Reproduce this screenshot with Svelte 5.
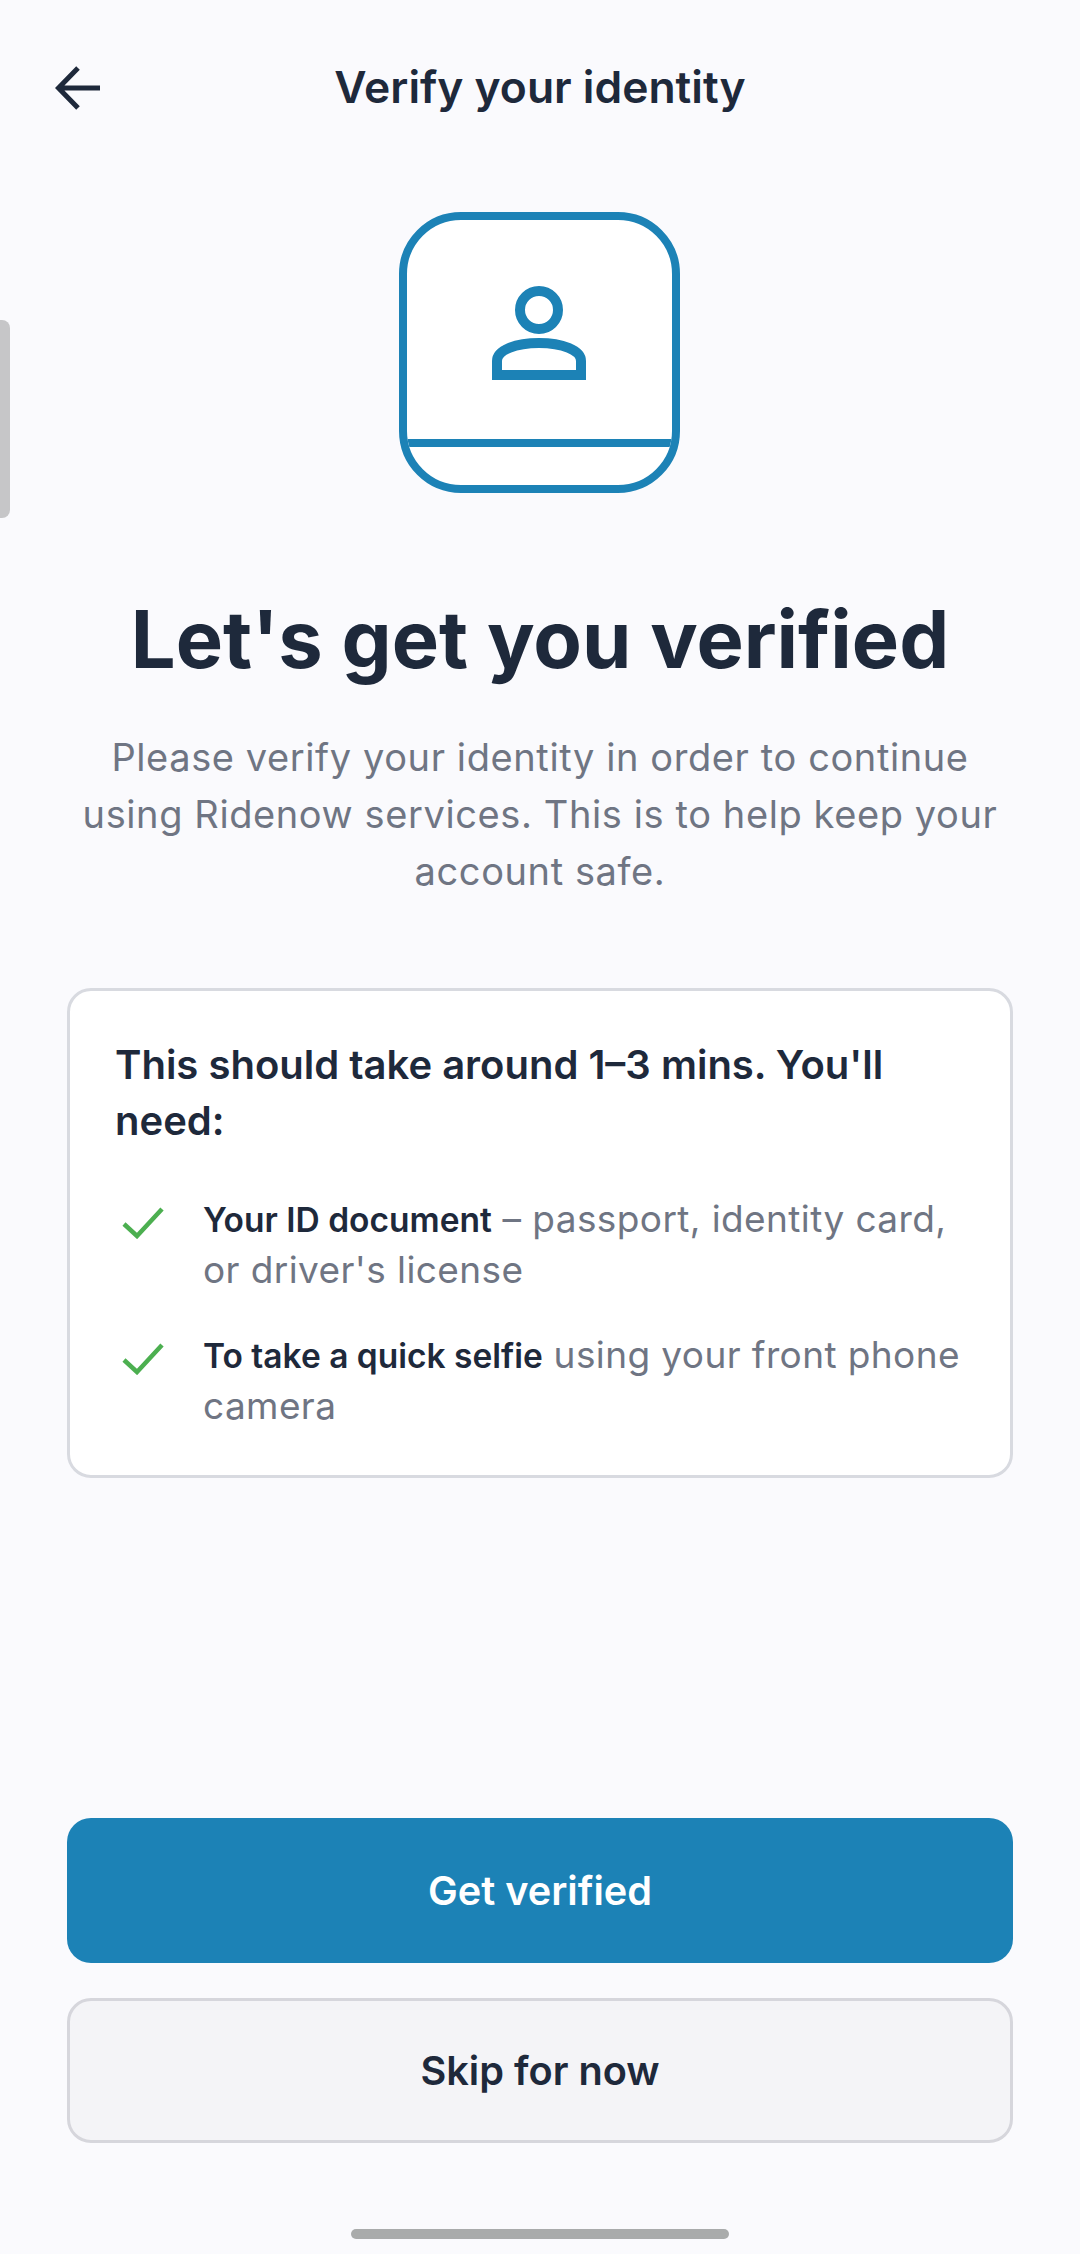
<script lang="ts">
	const needs = [
		{ label: 'Your ID document', rest: " – passport, identity card, or driver's license" },
		{ label: 'To take a quick selfie', rest: ' using your front phone camera' }
	];
</script>

<div class="screen">
	<span class="edge-handle"></span>

	<header class="topbar">
		<button class="back" aria-label="Back">
			<svg width="46" height="44" viewBox="0 0 46 44" fill="none" stroke="#1e293b" stroke-width="5">
				<path d="M45 22H4M23 2 3.500 22l19.500 20" />
			</svg>
		</button>
		<h2 class="title">Verify your identity</h2>
	</header>

	<div class="hero-icon">
		<div class="hero-top">
			<svg width="94" height="94" viewBox="0 0 94 94" fill="none" stroke="#1c82b6" stroke-width="10">
				<circle cx="47" cy="24" r="19" />
				<path d="M5 89V75C5 64 24 57 47 57s42 7 42 18v14z" />
			</svg>
		</div>
		<div class="hero-bottom"></div>
	</div>

	<h1 class="heading">Let's get you verified</h1>
	<p class="lead">Please verify your identity in order to continue using Ridenow services. This is to help keep your account safe.</p>

	<section class="card">
		<h3 class="card-title">This should take around 1–3 mins. You'll need:</h3>
		<ul class="needs">
			{#each needs as need}
				<li>
					<svg class="check" width="42" height="32" viewBox="0 0 42 32" fill="none" stroke="#4caf50" stroke-width="4.5">
						<path d="M2 17l13 12L40 2" />
					</svg>
					<p><strong>{need.label}</strong>{need.rest}</p>
				</li>
			{/each}
		</ul>
	</section>

	<div class="actions">
		<button class="btn primary">Get verified</button>
		<button class="btn secondary">Skip for now</button>
	</div>

	<div class="home-bar"></div>
</div>

<style>
	:global(body) {
		margin: 0;
		background: #fafafd;
	}

	.screen {
		position: relative;
		box-sizing: border-box;
		height: 2254px;
		padding: 0 67px 15px;
		display: flex;
		flex-direction: column;
		align-items: center;
		background: #fafafd;
		font-family: Inter, 'Noto Sans', sans-serif;
		color: #1e293b;
		overflow: hidden;
	}

	.edge-handle {
		position: absolute;
		left: 0;
		top: 320px;
		width: 10px;
		height: 198px;
		background: #c6c6c8;
		border-radius: 0 8px 8px 0;
	}

	.topbar {
		position: relative;
		align-self: stretch;
		height: 174px;
		display: flex;
		justify-content: center;
		align-items: center;
	}

	.back {
		position: absolute;
		left: -12px;
		top: 66px;
		padding: 0;
		border: 0;
		background: none;
		line-height: 0;
	}

	.title {
		margin: 0;
		font-size: 44.4px;
		font-weight: 600;
		line-height: 52px;
	}

	.hero-icon {
		margin-top: 38px;
		box-sizing: border-box;
		width: 281px;
		height: 281px;
		border: 8px solid #1c82b6;
		border-radius: 62px;
		background: #fff;
		display: flex;
		flex-direction: column;
		overflow: hidden;
		transform: translateX(-1px);
	}

	.hero-top {
		height: 227px;
		flex: none;
		box-sizing: border-box;
		border-bottom: 8px solid #1c82b6;
		display: flex;
		justify-content: center;
		padding-top: 66px;
	}

	.hero-bottom {
		flex: 1;
	}

	.heading {
		margin: 96px 0 0;
		font-size: 79.4px;
		line-height: 100px;
		font-weight: 700;
	}

	.lead {
		max-width: 940px;
		margin: 40px 0 0;
		font-size: 38px;
		line-height: 57px;
		letter-spacing: 0.6px;
		text-align: center;
		color: #6f7583;
	}

	.card {
		margin-top: 88px;
		align-self: stretch;
		box-sizing: border-box;
		height: 490px;
		padding: 46px 45px 0;
		background: #fff;
		border: 3px solid #d8dae0;
		border-radius: 24px;
	}

	.card-title {
		margin: 0;
		font-size: 40px;
		line-height: 56px;
		font-weight: 600;
	}

	.needs {
		list-style: none;
		margin: 45px 0 0;
		padding: 0;
		display: flex;
		flex-direction: column;
		gap: 35px;
	}

	.needs li {
		display: flex;
		gap: 39px;
	}

	.check {
		flex: none;
		margin: 13px 0 0 7px;
	}

	.needs p {
		margin: 0;
		font-size: 37px;
		line-height: 50px;
		letter-spacing: 0.4px;
		color: #6f7583;
	}

	.needs strong {
		font-size: 33.5px;
		font-weight: 600;
		letter-spacing: 0;
		color: #1e293b;
	}

	.actions {
		margin-top: auto;
		align-self: stretch;
		display: flex;
		flex-direction: column;
		gap: 35px;
	}

	.btn {
		box-sizing: border-box;
		height: 145px;
		border-radius: 24px;
		font-family: inherit;
		font-size: 39.7px;
		font-weight: 600;
	}

	.primary {
		border: 0;
		background: #1c82b6;
		color: #fff;
	}

	.secondary {
		border: 3px solid #d6d6dc;
		background: #f4f4f7;
		color: #1e293b;
	}

	.home-bar {
		margin-top: 86px;
		width: 378px;
		height: 10px;
		flex: none;
		border-radius: 5px;
		background: #a9abab;
	}
</style>
